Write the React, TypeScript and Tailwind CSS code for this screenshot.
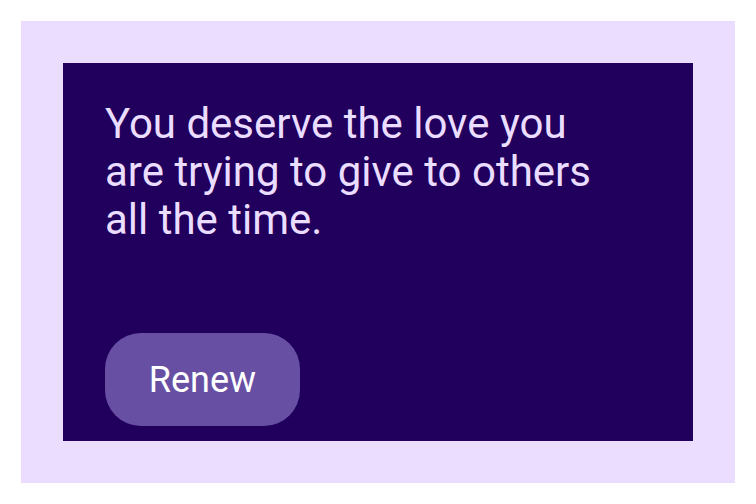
export default function App() {
    return (
        <div className="w-[756px] h-[504px] bg-white p-[21px]" style={{ fontFamily: "Roboto, sans-serif" }}>
            <div className="w-[714px] h-[462px] bg-[#eaddff] p-[42px]">
                {/* Quote card */}
                <div className="w-[630px] h-[378px] bg-[#21005d] px-[42px] pt-[37px] flex flex-col">
                    <p className="w-[520px] text-[42px] leading-[48px] text-[#eaddff]">
                        You deserve the love you are trying to give to others all the time.
                    </p>
                    <div className="mt-auto mb-[15px]">
                        <button className="w-[195px] h-[93px] rounded-[36px] bg-[#6750a4] text-white text-[36px]">
                            Renew
                        </button>
                    </div>
                </div>
            </div>
        </div>
    );
}
